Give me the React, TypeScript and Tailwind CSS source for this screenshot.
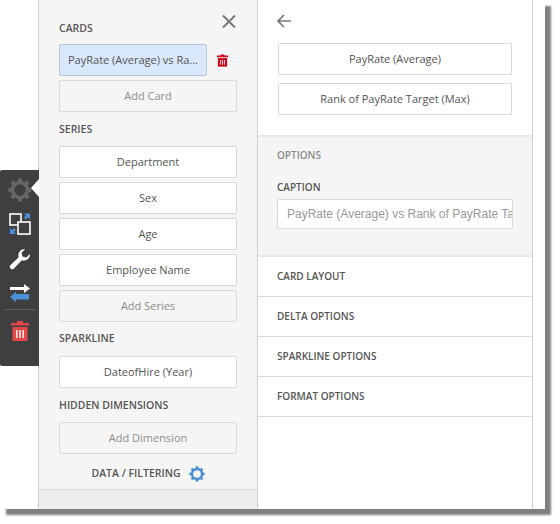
import React from "react"

const Label = ({ text, className = "" }: { text: string; className?: string }) => (
  <div className={`text-[10.5px] leading-[14px] font-semibold text-[#555] uppercase ${className}`}>{text}</div>
)

const Box = ({ text, add, className = "" }: { text: string; add?: boolean; className?: string }) => (
  <div
    className={`h-[32px] rounded-[2px] border border-[#d9d9d9] flex items-center justify-center text-[11px] ${
      add ? "text-[#8d8d8d] bg-[#f5f5f5]" : "text-[#555] bg-white"
    } ${className}`}
  >
    {text}
  </div>
)

const Gear = ({ size, color }: { size: number; color: string }) => (
  <svg width={size} height={size} viewBox="0 0 24 24">
    <circle cx="12" cy="12" r="7.5" fill="none" stroke={color} strokeWidth="3.6" />
    {[0, 45, 90, 135, 180, 225, 270, 315].map((a) => (
      <rect key={a} x="10" y="0.5" width="4" height="4" fill={color} transform={`rotate(${a} 12 12)`} />
    ))}
  </svg>
)

const Trash = ({ w, h, color }: { w: number; h: number; color: string }) => (
  <svg width={w} height={h} viewBox="0 0 18 20">
    <path d="M6 0h6v2h6v2.5H0V2h6z" fill={color} />
    <path d="M1.5 6h15v14h-15z" fill={color} />
    <path d="M5 9h1.6v8H5zM8.2 9h1.6v8H8.2zM11.4 9H13v8h-1.6z" fill="#fff" fillOpacity="0.85" />
  </svg>
)

const Toolbar = () => (
  <div className="absolute left-0 top-[170px] w-[39px] h-[196px] bg-[#3f3f3f] flex flex-col items-center rounded-l-[2px]">
    <div className="absolute left-[31px] top-[9px] w-0 h-0 border-y-[9px] border-y-transparent border-r-[8px] border-r-white" />
    <div className="mt-[8px] h-[24px] flex items-center">
      <Gear size={24} color="#666" />
    </div>
    <svg className="mt-[11px]" width="22" height="22" viewBox="0 0 22 22">
      <rect x="1" y="1" width="11" height="11" fill="none" stroke="#fff" strokeWidth="1.6" />
      <rect x="9" y="9" width="12" height="12" fill="#3f3f3f" stroke="#fff" strokeWidth="1.6" />
      <path d="M15 0.5h6v6l-2-2-2 2-2-2 2-2z" fill="#4a90d9" />
      <path d="M1 21v-6l2 2 2-2 2 2-2 2 2 2z" fill="#4a90d9" />
    </svg>
    <svg className="mt-[13px]" width="22" height="22" viewBox="0 0 24 24">
      <path
        d="M22.7 6.5a6.5 6.5 0 0 1-8.7 6.9l-8.6 8.9a2.6 2.6 0 0 1-3.7-3.7l8.9-8.6A6.5 6.5 0 0 1 17.5 1.300l-3.800 3.800 1 4.200 4.200 1z"
        fill="#fff"
      />
    </svg>
    <svg className="mt-[14px]" width="20" height="18" viewBox="0 0 20 18">
      <path d="M0 3h14V0l6 4.500-6 4.500V6H0z" fill="#fff" />
      <path d="M19 10H6V7.800L0 13l6 5v-2.500h13z" fill="#4a90d9" />
    </svg>
    <div className="mt-[7px] w-[32px] h-px bg-[#5c5c5c]" />
    <div className="mt-[11px]">
      <Trash w={18} h={20} color="#e04848" />
    </div>
  </div>
)

const Row = ({ text }: { text: string }) => (
  <div className="h-[40px] flex items-center px-[19px] border-b border-[#dcdcdc] text-[10px] font-semibold text-[#555] uppercase">
    {text}
  </div>
)

export default function App() {
  return (
    <div className="w-[560px] h-[524px] bg-white relative font-['Open_Sans',sans-serif]">
      <div className="w-[545px] h-[509px] bg-white shadow-[6px_6px_2px_#808080] flex pl-[38px] pr-[13px]">
        <div className="w-[220px] shrink-0 flex flex-col bg-[#f5f5f5] border-x border-[#cfcfcf]">
          <div className="relative flex-1 px-[20px] pt-[21px]">
            <svg className="absolute left-[183px] top-[15px]" width="14" height="13" viewBox="0 0 14 13">
              <path d="M1 0.500l12 12M13 0.500l-12 12" stroke="#777" strokeWidth="2" fill="none" />
            </svg>
            <Label text="Cards" />
            <div className="mt-[9px] flex items-center">
              <div className="w-[148px] h-[32px] rounded-[2px] bg-[#d9e8fb] border border-[#b5c6dc] flex items-center justify-center text-[11px] text-[#555]">
                PayRate (Average) vs Ra...
              </div>
              <div className="ml-[10px] flex">
                <Trash w={11} h={13} color="#d0021b" />
              </div>
            </div>
            <Box text="Add Card" add className="mt-[4px]" />
            <Label text="Series" className="mt-[10px]" />
            <div className="mt-[10px] flex flex-col gap-[4px]">
              <Box text="Department" />
              <Box text="Sex" />
              <Box text="Age" />
              <Box text="Employee Name" />
              <Box text="Add Series" add />
            </div>
            <Label text="Sparkline" className="mt-[9px]" />
            <Box text="DateofHire (Year)" className="mt-[11px]" />
            <Label text="Hidden Dimensions" className="mt-[10px]" />
            <Box text="Add Dimension" add className="mt-[10px]" />
            <div className="mt-[12px] flex items-center justify-center gap-[8px]">
              <span className="text-[10.5px] font-semibold text-[#555] uppercase">Data / Filtering</span>
              <Gear size={16} color="#4a90d9" />
            </div>
          </div>
          <div className="h-[20px] bg-[#ececec] border-t border-[#d9d9d9]" />
        </div>
        <div className="flex-1 flex flex-col bg-white border-r border-[#cfcfcf]">
          <div className="h-[135px] px-[20px] pt-[14px]">
            <svg width="14" height="14" viewBox="0 0 14 14" className="ml-[-1px]">
              <path d="M7 1L1 7l6 6M1 7h13" stroke="#777" strokeWidth="1.700" fill="none" />
            </svg>
            <div className="mt-[15px] flex flex-col gap-[8px]">
              <Box text="PayRate (Average)" />
              <Box text="Rank of PayRate Target (Max)" />
            </div>
          </div>
          <div className="h-[122px] bg-[#f5f5f5] border-y-2 border-[#e8e8e8] px-[19px] pt-[11px]">
            <div className="text-[10px] leading-[14px] font-semibold text-[#8a8a8a] uppercase">Options</div>
            <div className="mt-[18px] text-[10px] leading-[14px] font-semibold text-[#555] uppercase">Caption</div>
            <div className="mt-[5px] w-[236px] h-[30px] bg-white border border-[#d9d9d9] rounded-[2px] pl-[9px] flex items-center overflow-hidden whitespace-nowrap font-['Liberation_Sans',sans-serif] text-[12px] text-[#999]">
              PayRate (Average) vs Rank of PayRate Target (Max)
            </div>
          </div>
          <Row text="Card Layout" />
          <Row text="Delta Options" />
          <Row text="Sparkline Options" />
          <Row text="Format Options" />
        </div>
      </div>
      <Toolbar />
    </div>
  )
}
